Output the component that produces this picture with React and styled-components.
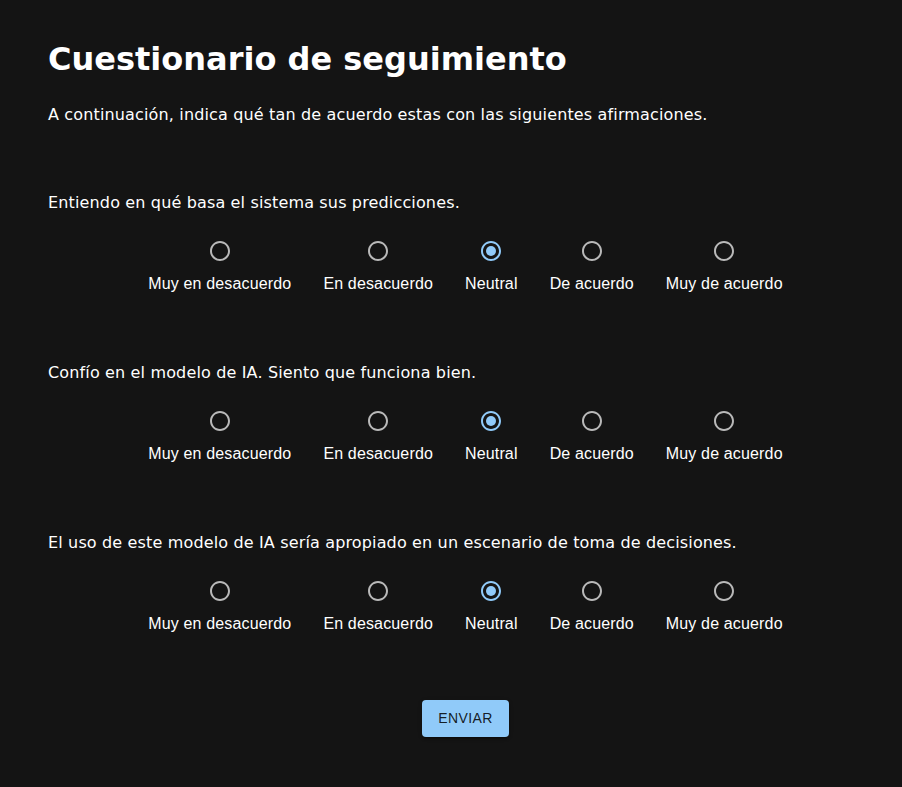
import React, { useState } from 'react';
import styled, { createGlobalStyle } from 'styled-components';

const GlobalStyle = createGlobalStyle`
  html, body {
    margin: 0;
    padding: 0;
    background: #141414;
  }
  body {
    min-height: 787px;
    color: #ffffff;
    font-family: "DejaVu Sans", sans-serif;
  }
`;

const Page = styled.div`
  padding: 39px 19px 40px 48px;
`;

const Title = styled.h1`
  margin: 0;
  font-family: "DejaVu Sans", sans-serif;
  font-weight: 700;
  font-size: 32px;
  line-height: 40px;
  color: #ffffff;
`;

const Intro = styled.p`
  margin: 24px 0 -1px;
  font-size: 16px;
  line-height: 24px;
  letter-spacing: 0.15px;
  color: #ffffff;
`;

const Question = styled.section`
  margin-top: 65px;
`;

const Statement = styled.p`
  margin: 0 0 15px;
  font-size: 16px;
  line-height: 24px;
  letter-spacing: 0.15px;
  color: #ffffff;
`;

const Options = styled.div`
  display: flex;
  justify-content: center;
`;

const Option = styled.label`
  display: flex;
  flex-direction: column;
  align-items: center;
  margin: 0 16px;
  cursor: pointer;
  font-family: "Liberation Sans", Arial, sans-serif;
  font-size: 16px;
  line-height: 24px;
  letter-spacing: 0.15px;
  color: #ffffff;
`;

const RadioBox = styled.span`
  width: 42px;
  height: 42px;
  display: flex;
  align-items: center;
  justify-content: center;
  color: ${(p) => (p.$checked ? '#90caf9' : 'rgba(255, 255, 255, 0.7)')};
  input {
    display: none;
  }
`;

const Actions = styled.div`
  display: flex;
  justify-content: center;
  margin-top: 64px;
`;

const Button = styled.button`
  border: 0;
  border-radius: 4px;
  background: #90caf9;
  color: rgba(0, 0, 0, 0.87);
  font-family: "Liberation Sans", Arial, sans-serif;
  font-size: 14px;
  font-weight: 500;
  line-height: 24.5px;
  letter-spacing: 0.4px;
  text-transform: uppercase;
  padding: 6px 16px;
  min-width: 64px;
  cursor: pointer;
  box-shadow: 0 3px 1px -2px rgba(0, 0, 0, 0.2), 0 2px 2px 0 rgba(0, 0, 0, 0.14),
    0 1px 5px 0 rgba(0, 0, 0, 0.12);
`;

const choices = [
  'Muy en desacuerdo',
  'En desacuerdo',
  'Neutral',
  'De acuerdo',
  'Muy de acuerdo',
];

const statements = [
  'Entiendo en qué basa el sistema sus predicciones.',
  'Confío en el modelo de IA. Siento que funciona bien.',
  'El uso de este modelo de IA sería apropiado en un escenario de toma de decisiones.',
];

function RadioIcon({ checked }) {
  return (
    <svg width="24" height="24" viewBox="0 0 24 24" fill="currentColor">
      <path d="M12 2C6.48 2 2 6.48 2 12s4.48 10 10 10 10-4.48 10-10S17.52 2 12 2zm0 18c-4.42 0-8-3.58-8-8s3.58-8 8-8 8 3.58 8 8-3.58 8-8 8z" />
      {checked && <circle cx="12" cy="12" r="5" />}
    </svg>
  );
}

export default function App() {
  const [answers, setAnswers] = useState(['Neutral', 'Neutral', 'Neutral']);

  const pick = (qi, value) => {
    setAnswers((prev) => prev.map((a, i) => (i === qi ? value : a)));
  };

  return (
    <>
      <GlobalStyle />
      <Page>
        <Title>Cuestionario de seguimiento</Title>
        <Intro>
          A continuación, indica qué tan de acuerdo estas con las siguientes
          afirmaciones.
        </Intro>
        {statements.map((text, qi) => (
          <Question key={qi}>
            <Statement>{text}</Statement>
            <Options>
              {choices.map((choice) => {
                const checked = answers[qi] === choice;
                return (
                  <Option key={choice}>
                    <RadioBox $checked={checked}>
                      <input
                        type="radio"
                        name={`q${qi}`}
                        value={choice}
                        checked={checked}
                        onChange={() => pick(qi, choice)}
                      />
                      <RadioIcon checked={checked} />
                    </RadioBox>
                    <span>{choice}</span>
                  </Option>
                );
              })}
            </Options>
          </Question>
        ))}
        <Actions>
          <Button type="button">Enviar</Button>
        </Actions>
      </Page>
    </>
  );
}
